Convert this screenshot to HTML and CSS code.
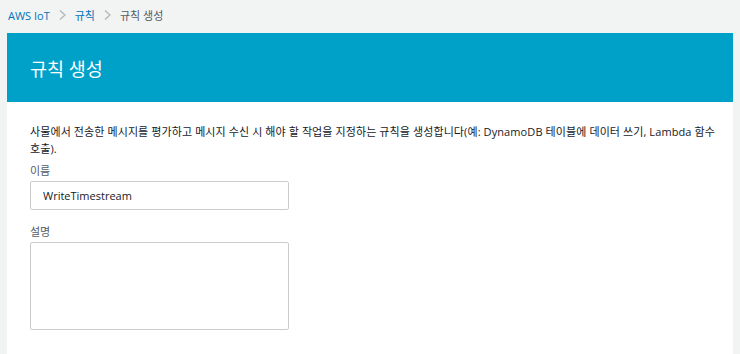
FILE: index.html
```html
<!DOCTYPE html>
<html lang="ko">
<head>
	<meta charset="UTF-8">
	<title>규칙 생성</title>
	<link rel="stylesheet" href="styles.css">
</head>
<body>
	<div class="breadcrumb">
		<a class="crumb-link" href="#">AWS IoT</a>
		<svg class="crumb-sep" width="7" height="10" viewBox="0 0 7 10"><path d="M1 0.5 L6 5 L1 9.5" fill="none" stroke="#aab7b8" stroke-width="1.2"/></svg>
		<a class="crumb-link" href="#">규칙</a>
		<svg class="crumb-sep" width="7" height="10" viewBox="0 0 7 10"><path d="M1 0.5 L6 5 L1 9.5" fill="none" stroke="#aab7b8" stroke-width="1.2"/></svg>
		<span class="crumb-current">규칙 생성</span>
	</div>

	<div class="panel">
		<div class="panel-head">
			<h1>규칙 생성</h1>
		</div>
		<div class="panel-body">
			<p class="desc">사물에서 전송한 메시지를 평가하고 메시지 수신 시 해야 할 작업을 지정하는 규칙을 생성합니다(예: DynamoDB 테이블에 데이터 쓰기, Lambda 함수 호출).</p>

			<div class="field">
				<label class="field-label">이름</label>
				<input class="field-input" type="text" value="WriteTimestream">
			</div>

			<div class="field">
				<label class="field-label">설명</label>
				<textarea class="field-area"></textarea>
			</div>
		</div>
	</div>
</body>
</html>
```

FILE: styles.css
```css
*{
	margin: 0;
	padding: 0;
	box-sizing: border-box;
}
body{
	background-color: #f2f3f3;
	font-family: "Open Sans", "Noto Sans CJK KR", sans-serif;
	font-size: 11px;
	color: #16191f;
	overflow: hidden;
}
.breadcrumb{
	display: flex;
	align-items: center;
	height: 33px;
	padding-left: 8px;
	padding-bottom: 3px;
	gap: 8px;
}
.crumb-link{
	color: #0073bb;
	text-decoration: none;
}
.crumb-sep{
	display: block;
	margin: 0 1px;
}
.crumb-current{
	color: #545b64;
}
.panel{
	margin-left: 7px;
	width: 726px;
	background-color: #fff;
	min-height: 330px;
}
.panel-head{
	background-color: #00a1c9;
	height: 69px;
	display: flex;
	align-items: center;
	padding-left: 23px;
}
.panel-head h1{
	color: #fff;
	font-size: 18.5px;
	font-weight: normal;
}
.panel-body{
	padding: 21px 0 21px 23px;
}
.desc{
	line-height: 17px;
	letter-spacing: 0.1px;
	width: 700px;
	word-break: keep-all;
}
.field{
	margin-top: 7px;
}
.field + .field{
	margin-top: 15px;
}
.field-label{
	display: block;
	color: #545b64;
	line-height: 14px;
	margin-bottom: 3px;
}
.field-input{
	display: block;
	width: 259px;
	height: 29px;
	border: 1px solid #ccc;
	border-radius: 2px;
	padding: 0 12px;
	font-family: inherit;
	font-size: 11px;
	color: #16191f;
}
.field-area{
	display: block;
	width: 259px;
	height: 88px;
	border: 1px solid #ccc;
	border-radius: 2px;
	resize: none;
	font-family: inherit;
}
```
